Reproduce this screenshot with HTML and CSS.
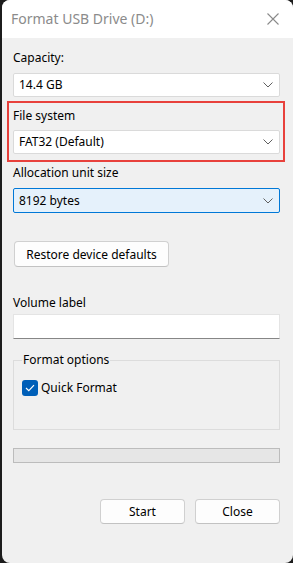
FILE: index.html
```html
<!DOCTYPE html>
<html lang="en">
<head>
    <meta charset="UTF-8">
    <meta name="viewport" content="width=device-width, initial-scale=1.0">
    <title>Format USB Drive (D:)</title>
    <link rel="stylesheet" href="styles.css">
</head>
<body>
    <div class="window">
        <div class="titlebar">
            <span class="title">Format USB Drive (D:)</span>
            <span class="close-x">
                <svg width="12" height="12" viewBox="0 0 12 12"><path d="M0.5 0.5 L11.5 11.5 M11.5 0.5 L0.5 11.5" stroke="#8a8a8a" stroke-width="1.1" fill="none"/></svg>
            </span>
        </div>
        <div class="content">
            <label class="field-label">Capacity:</label>
            <div class="combo">
                <span>14.4 GB</span>
                <svg class="chev" width="10" height="6" viewBox="0 0 10 6"><path d="M0.5 0.5 L5 5 L9.5 0.5" stroke="#606060" stroke-width="1" fill="none"/></svg>
            </div>

            <div class="highlight">
                <label class="field-label">File system</label>
                <div class="combo">
                    <span>FAT32 (Default)</span>
                    <svg class="chev" width="10" height="6" viewBox="0 0 10 6"><path d="M0.5 0.5 L5 5 L9.5 0.5" stroke="#606060" stroke-width="1" fill="none"/></svg>
                </div>
            </div>

            <label class="field-label alloc-label">Allocation unit size</label>
            <div class="combo focused">
                <span>8192 bytes</span>
                <svg class="chev" width="10" height="6" viewBox="0 0 10 6"><path d="M0.5 0.5 L5 5 L9.5 0.5" stroke="#606060" stroke-width="1" fill="none"/></svg>
            </div>

            <button class="btn restore">Restore device defaults</button>

            <label class="field-label volume-label">Volume label</label>
            <div class="textbox"></div>

            <fieldset class="group">
                <legend>Format options</legend>
                <div class="check-row">
                    <span class="checkbox">
                        <svg width="10" height="8" viewBox="0 0 10 8"><path d="M1 4 L3.8 6.6 L9 1.2" stroke="#fff" stroke-width="1.2" fill="none"/></svg>
                    </span>
                    <span>Quick Format</span>
                </div>
            </fieldset>

            <div class="progress"></div>

            <div class="actions">
                <button class="btn action">Start</button>
                <button class="btn action">Close</button>
            </div>
        </div>
    </div>
</body>
</html>
```

FILE: styles.css
```css
body {
    margin: 0;
    background-color: #1c1c1c;
    font-family: "Noto Sans", "Open Sans", sans-serif;
    font-size: 12px;
    line-height: 16px;
    color: #000;
}
.window {
    margin-left: 2px;
    width: 291px;
    height: 563px;
    background: #f0f0f0;
    border-radius: 8px;
    overflow: hidden;
}
.titlebar {
    height: 38px;
    background: #fff;
    display: flex;
    align-items: center;
    justify-content: space-between;
    padding: 0 14px 0 9px;
}
.title {
    font-size: 14px;
    color: #8b8b8b;
    margin-top: -1px;
}
.close-x {
    display: flex;
    margin-top: -1px;
}
.content {
    display: flex;
    flex-direction: column;
    padding: 12px 13px 0 11px;
}
.field-label {
    display: block;
    height: 16px;
    line-height: 16px;
    margin-bottom: 7px;
}
.combo {
    height: 24px;
    box-sizing: border-box;
    background: #fff;
    border: 1px solid #dadada;
    border-radius: 2px;
    display: flex;
    align-items: center;
    justify-content: space-between;
    padding: 0 6px 0 5px;
}
.combo.focused {
    background: #e5f1fb;
    border-color: #0078d7;
    height: 25px;
}
.highlight {
    margin: 4px -5px 0 -6px;
    border: 2px solid #e8413c;
    padding: 5px 3px 6px 4px;
}
.highlight .field-label {
    margin-bottom: 6px;
}
.alloc-label {
    margin-top: 3px;
}
.btn {
    font-family: inherit;
    font-size: 12px;
    color: #000;
    background: #fdfdfd;
    border: 1px solid #d0d0d0;
    border-bottom-color: #c2c2c2;
    border-radius: 4px;
    padding: 0;
}
.restore {
    margin-top: 28px;
    margin-left: 1px;
    width: 155px;
    height: 26px;
}
.volume-label {
    margin-top: 28px;
    margin-bottom: 3px;
}
.textbox {
    height: 25px;
    box-sizing: border-box;
    background: #fff;
    border: 1px solid #e4e4e4;
    border-bottom: 1px solid #868686;
}
.group {
    margin: 13px 0 0 0;
    padding: 12px 0 0 8px;
    border: 1px solid #dcdcdc;
    height: 78px;
    box-sizing: border-box;
}
.group legend {
    padding: 0 1px;
    margin-left: 0;
    line-height: 16px;
}
.check-row {
    display: flex;
    align-items: center;
    gap: 3px;
}
.checkbox {
    width: 16px;
    height: 16px;
    border-radius: 3px;
    background: #005fb8;
    display: flex;
    align-items: center;
    justify-content: center;
}
.progress {
    margin-top: 18px;
    height: 15px;
    box-sizing: border-box;
    background: #e6e6e6;
    border: 1px solid #bcbcbc;
}
.actions {
    margin-top: 36px;
    display: flex;
    justify-content: flex-end;
    gap: 10px;
}
.action {
    width: 85px;
    height: 25px;
}
```
